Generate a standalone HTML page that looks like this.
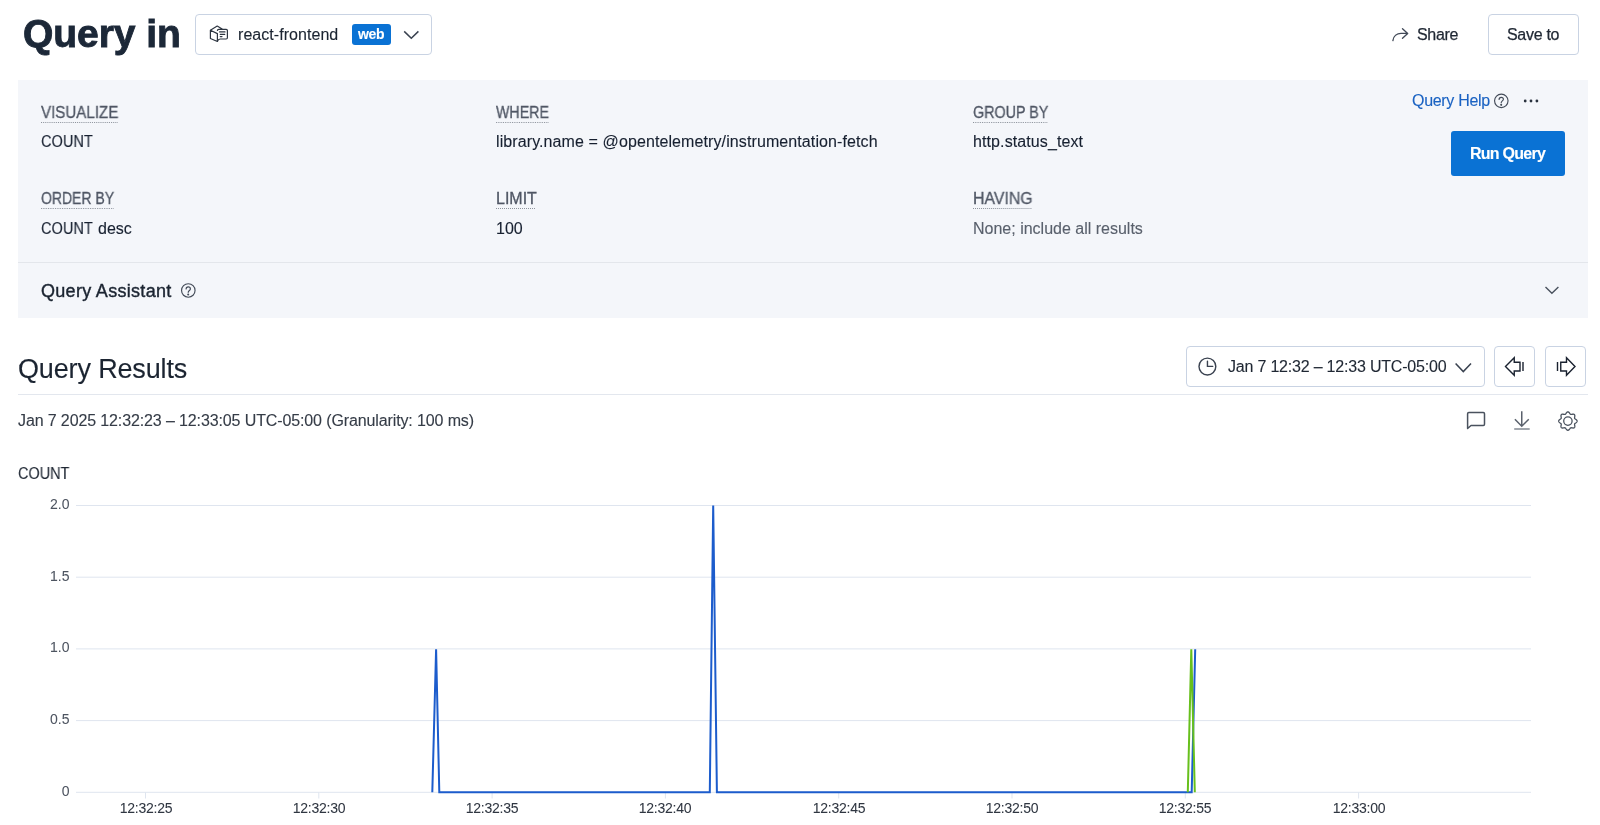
<!DOCTYPE html>
<html><head><meta charset="utf-8">
<style>
html,body{margin:0;padding:0;background:#fff;width:1600px;height:825px;overflow:hidden;position:relative}
body{font-family:"Liberation Sans",sans-serif;color:#172030}
.t{position:absolute;will-change:transform;-webkit-text-stroke-width:0.12px;white-space:nowrap;line-height:1;font-size:16px}
.box{position:absolute;box-sizing:border-box;border:1px solid #c9d3e3;border-radius:4px;background:#fff}
svg{position:absolute;overflow:visible}
.lbl{color:#4f5664;-webkit-text-stroke-width:0.3px;text-decoration:underline dotted #8d939c;text-underline-offset:4px;text-decoration-thickness:1px}
</style></head><body>

<!-- header -->
<div class="t" style="left:23.3px;top:13.8px;font-size:39px;letter-spacing:-0.05px;-webkit-text-stroke-width:0.9px;font-weight:700;color:#1c2838">Query in</div>
<div class="box" style="left:195px;top:14px;width:237px;height:41px"></div>
<svg style="left:205px;top:20px" width="40" height="28" viewBox="0 0 40 28" fill="none" stroke="#2d3540" stroke-width="1.2" stroke-linejoin="round" stroke-linecap="round">
  <path d="M12.4 21.5 L5.4 18.5 L5.4 10.2 L12.2 6.1 L17.6 9.2 M5.4 10.2 L12.4 13.6 L12.4 21.5 M12.4 21.5 Q13.2 19 15.2 19 H21.2 Q22.4 19 22.4 17.8 V10.5 Q22.4 9.3 21.2 9.3 H13.8 Q12.4 9.3 12.4 10.5"/>
  <path d="M14.6 11.9 H20 M15.3 14.4 H19.7 M15.3 16.6 H17"/>
</svg>
<div class="t" style="left:238px;top:26.6px;letter-spacing:0.05px;color:#1b2431">react-frontend</div>
<div style="position:absolute;left:352px;top:24px;width:38.5px;height:20.5px;background:#0a72d4;border-radius:3px"></div>
<div class="t" style="left:358px;top:27px;font-size:14px;font-weight:700;color:#fff;letter-spacing:-0.3px">web</div>
<svg style="left:400px;top:28px" width="24" height="14" viewBox="0 0 24 14" fill="none" stroke="#3a4250" stroke-width="1.5"><path d="M4.2 3.4 L11.3 10.3 L18.4 3.4"/></svg>

<svg style="left:1385px;top:22px" width="30" height="24" viewBox="0 0 30 24" fill="none" stroke="#414957" stroke-width="1.35" stroke-linecap="round" stroke-linejoin="round"><path d="M7.9 18.6 C8.5 14 12 11.4 16 11.4 H22.5 M17.5 6.8 L22.7 11.4 L17.5 16.2"/></svg>
<div class="t" style="left:1416.7px;top:26.5px;letter-spacing:-0.3px;color:#1f2733;-webkit-text-stroke:0.25px #1f2733">Share</div>
<div class="box" style="left:1488px;top:14px;width:91px;height:41px"></div>
<div class="t" style="left:1506.5px;top:26.5px;letter-spacing:-0.3px;color:#1f2733;-webkit-text-stroke:0.25px #1f2733">Save to</div>

<!-- query panel -->
<div style="position:absolute;left:18px;top:80px;width:1570px;height:238px;background:#f4f6fa"></div>
<div style="position:absolute;left:18px;top:262px;width:1570px;height:1px;background:#e3e6eb"></div>

<div class="t lbl" style="left:41px;top:104.8px;transform:scaleX(0.945);transform-origin:0 0">VISUALIZE</div>
<div class="t" style="left:41px;top:134.3px;transform:scaleX(0.912);transform-origin:0 0">COUNT</div>
<div class="t lbl" style="left:496px;top:104.8px;transform:scaleX(0.888);transform-origin:0 0">WHERE</div>
<div class="t" style="left:496px;top:134px;letter-spacing:0.1px">library.name = @opentelemetry/instrumentation-fetch</div>
<div class="t lbl" style="left:973px;top:104.8px;transform:scaleX(0.895);transform-origin:0 0">GROUP BY</div>
<div class="t" style="left:973px;top:134px;letter-spacing:0.1px">http.status_text</div>

<div class="t lbl" style="left:41px;top:191.2px;transform:scaleX(0.874);transform-origin:0 0">ORDER BY</div>
<div class="t" style="left:41px;top:220.8px;transform:scaleX(0.912);transform-origin:0 0">COUNT</div><div class="t" style="left:97.6px;top:220.8px">desc</div>
<div class="t lbl" style="left:496px;top:191.2px;letter-spacing:0px">LIMIT</div>
<div class="t" style="left:496px;top:220.6px">100</div>
<div class="t lbl" style="left:973px;top:191.2px;transform:scaleX(0.99);transform-origin:0 0">HAVING</div>
<div class="t" style="left:973px;top:220.6px;color:#59606c">None; include all results</div>

<div class="t" style="left:1411.5px;top:92.7px;letter-spacing:-0.3px;color:#1a62c2">Query Help</div>
<svg style="left:1490px;top:90px" width="22" height="22" viewBox="0 0 22 22" fill="none" stroke="#434b58" stroke-width="1.15" stroke-linecap="round"><circle cx="11.3" cy="10.85" r="6.75"/><path d="M9.1 9.4 C9.1 8.1 10 7.3 11.2 7.3 C12.5 7.3 13.4 8.1 13.4 9.3 C13.4 10.7 11.2 11.1 11.2 12.7"/><circle cx="11.2" cy="14.85" r="0.45" fill="#434b58"/></svg>
<svg style="left:1520px;top:96px" width="22" height="10" viewBox="0 0 22 10"><circle cx="5.2" cy="5" r="1.4" fill="#2a323e"/><circle cx="11" cy="5" r="1.4" fill="#2a323e"/><circle cx="16.9" cy="5" r="1.4" fill="#2a323e"/></svg>

<div style="position:absolute;left:1451px;top:131px;width:114px;height:45px;background:#0a72d4;border-radius:3px"></div>
<div class="t" style="left:1470px;top:145.5px;font-size:16px;font-weight:700;color:#fff;letter-spacing:-0.75px">Run Query</div>

<div class="t" style="left:41px;top:282px;font-size:18px;color:#1b2431;-webkit-text-stroke:0.4px #1b2431;letter-spacing:0.3px">Query Assistant</div>
<svg style="left:178px;top:280px" width="22" height="22" viewBox="0 0 22 22" fill="none" stroke="#434b58" stroke-width="1.15" stroke-linecap="round"><circle cx="10.3" cy="10.45" r="6.75"/><path d="M8.1 9 C8.1 7.7 9 6.9 10.2 6.9 C11.5 6.9 12.4 7.7 12.4 8.9 C12.4 10.3 10.2 10.7 10.2 12.3"/><circle cx="10.2" cy="14.45" r="0.45" fill="#434b58"/></svg>
<svg style="left:1540px;top:282px" width="24" height="18" viewBox="0 0 24 18" fill="none" stroke="#4a525e" stroke-width="1.4"><path d="M5.5 5 L11.9 11.3 L18.4 5"/></svg>

<!-- results header -->
<div class="t" style="left:18px;top:356.3px;font-size:27px;letter-spacing:-0.15px;color:#1b2431">Query Results</div>
<div style="position:absolute;left:18px;top:394px;width:1570px;height:1px;background:#e3e7ee"></div>

<div class="box" style="left:1186px;top:346px;width:299px;height:41px"></div>
<svg style="left:1194px;top:352px" width="30" height="30" viewBox="0 0 30 30" fill="none" stroke="#3a4250" stroke-width="1.4" stroke-linecap="round"><circle cx="13.4" cy="14.55" r="8.4"/><path d="M13.45 9.3 V14.4 H18.7"/></svg>
<div class="t" style="left:1228.3px;top:359px;color:#1f2733;letter-spacing:-0.2px">Jan 7 12:32 – 12:33 UTC-05:00</div>
<svg style="left:1450px;top:358px" width="26" height="18" viewBox="0 0 26 18" fill="none" stroke="#3a4250" stroke-width="1.5"><path d="M5.6 5.4 L13.3 13.6 L21 5.4"/></svg>

<div class="box" style="left:1494px;top:346px;width:41px;height:41px"></div>
<svg style="left:1500px;top:352px" width="30" height="30" viewBox="0 0 30 30" fill="none" stroke="#1a2230" stroke-width="1.4" stroke-linejoin="miter"><path d="M5.5 14.5 L14.25 5.75 V10.25 H20 V19 H14.25 V23.25 Z M23 10 V19"/></svg>
<div class="box" style="left:1545px;top:346px;width:41px;height:41px"></div>
<svg style="left:1550px;top:352px" width="30" height="30" viewBox="0 0 30 30" fill="none" stroke="#1a2230" stroke-width="1.4" stroke-linejoin="miter"><path d="M25 14.5 L16.5 5.75 V10.25 H10.75 V19 H16.5 V23.25 Z M7.5 10 V19"/></svg>

<div class="t" style="left:18px;top:412.6px;color:#353c47;letter-spacing:-0.12px">Jan 7 2025 12:32:23 – 12:33:05 UTC-05:00 (Granularity: 100 ms)</div>

<!-- action icons -->
<svg style="left:1460px;top:405px" width="30" height="30" viewBox="0 0 30 30" fill="none" stroke="#4a525e" stroke-width="1.5" stroke-linejoin="round"><path d="M8.8 7.5 H23.3 Q24.5 7.5 24.5 8.7 V19.3 Q24.5 20.5 23.3 20.5 H11 L7.6 23.5 V8.7 Q7.6 7.5 8.8 7.5 Z"/></svg>
<svg style="left:1505px;top:405px" width="30" height="30" viewBox="0 0 30 30" fill="none" stroke="#5a616c" stroke-width="1.5"><path d="M16.75 6.25 V21 M9.9 14.2 L16.75 21.2 L23.75 14.2"/><path d="M9.2 24 H24.7" stroke="#8a9099" stroke-width="1.6"/></svg>
<svg style="left:1552px;top:405px" width="32" height="32" viewBox="0 0 32 32" fill="none" stroke="#4a525e" stroke-width="1.3" stroke-linejoin="round"><path d="M15.90 6.90 L16.26 6.95 L16.61 7.11 L16.94 7.35 L17.24 7.66 L17.51 8.01 L17.76 8.36 L17.99 8.70 L18.21 8.98 L18.44 9.21 L18.69 9.36 L18.98 9.43 L19.30 9.43 L19.66 9.39 L20.06 9.32 L20.48 9.24 L20.92 9.19 L21.35 9.18 L21.76 9.24 L22.11 9.38 L22.41 9.59 L22.62 9.89 L22.76 10.24 L22.82 10.65 L22.81 11.08 L22.76 11.52 L22.68 11.94 L22.61 12.34 L22.57 12.70 L22.57 13.02 L22.64 13.31 L22.79 13.56 L23.02 13.79 L23.30 14.01 L23.64 14.24 L23.99 14.49 L24.34 14.76 L24.65 15.06 L24.89 15.39 L25.05 15.74 L25.10 16.10 L25.05 16.46 L24.89 16.81 L24.65 17.14 L24.34 17.44 L23.99 17.71 L23.64 17.96 L23.30 18.19 L23.02 18.41 L22.79 18.64 L22.64 18.89 L22.57 19.18 L22.57 19.50 L22.61 19.86 L22.68 20.26 L22.76 20.68 L22.81 21.12 L22.82 21.55 L22.76 21.96 L22.62 22.31 L22.41 22.61 L22.11 22.82 L21.76 22.96 L21.35 23.02 L20.92 23.01 L20.48 22.96 L20.06 22.88 L19.66 22.81 L19.30 22.77 L18.98 22.77 L18.69 22.84 L18.44 22.99 L18.21 23.22 L17.99 23.50 L17.76 23.84 L17.51 24.19 L17.24 24.54 L16.94 24.85 L16.61 25.09 L16.26 25.25 L15.90 25.30 L15.54 25.25 L15.19 25.09 L14.86 24.85 L14.56 24.54 L14.29 24.19 L14.04 23.84 L13.81 23.50 L13.59 23.22 L13.36 22.99 L13.11 22.84 L12.82 22.77 L12.50 22.77 L12.14 22.81 L11.74 22.88 L11.32 22.96 L10.88 23.01 L10.45 23.02 L10.04 22.96 L9.69 22.82 L9.39 22.61 L9.18 22.31 L9.04 21.96 L8.98 21.55 L8.99 21.12 L9.04 20.68 L9.12 20.26 L9.19 19.86 L9.23 19.50 L9.23 19.18 L9.16 18.89 L9.01 18.64 L8.78 18.41 L8.50 18.19 L8.16 17.96 L7.81 17.71 L7.46 17.44 L7.15 17.14 L6.91 16.81 L6.75 16.46 L6.70 16.10 L6.75 15.74 L6.91 15.39 L7.15 15.06 L7.46 14.76 L7.81 14.49 L8.16 14.24 L8.50 14.01 L8.78 13.79 L9.01 13.56 L9.16 13.31 L9.23 13.02 L9.23 12.70 L9.19 12.34 L9.12 11.94 L9.04 11.52 L8.99 11.08 L8.98 10.65 L9.04 10.24 L9.18 9.89 L9.39 9.59 L9.69 9.38 L10.04 9.24 L10.45 9.18 L10.88 9.19 L11.32 9.24 L11.74 9.32 L12.14 9.39 L12.50 9.43 L12.82 9.43 L13.11 9.36 L13.36 9.21 L13.59 8.98 L13.81 8.70 L14.04 8.36 L14.29 8.01 L14.56 7.66 L14.86 7.35 L15.19 7.11 L15.54 6.95 Z"/><circle cx="15.9" cy="16.1" r="4.2"/></svg>

<!-- chart -->
<div class="t" style="left:18px;top:466px;color:#1f2733;transform:scaleX(0.904);transform-origin:0 0">COUNT</div>

<svg style="left:0;top:0" width="1600" height="825" viewBox="0 0 1600 825">
<g stroke="#dfe5ef" stroke-width="1" fill="none"><line x1="76" y1="505.5" x2="1531" y2="505.5"/><line x1="76" y1="577.2" x2="1531" y2="577.2"/><line x1="76" y1="648.9" x2="1531" y2="648.9"/><line x1="76" y1="720.6" x2="1531" y2="720.6"/><line x1="76" y1="792.3" x2="1531" y2="792.3"/><line x1="145.5" y1="792.3" x2="145.5" y2="798.5"/><line x1="318.8" y1="792.3" x2="318.8" y2="798.5"/><line x1="492.1" y1="792.3" x2="492.1" y2="798.5"/><line x1="665.4" y1="792.3" x2="665.4" y2="798.5"/><line x1="838.7" y1="792.3" x2="838.7" y2="798.5"/><line x1="1012.0" y1="792.3" x2="1012.0" y2="798.5"/><line x1="1185.3" y1="792.3" x2="1185.3" y2="798.5"/><line x1="1358.6" y1="792.3" x2="1358.6" y2="798.5"/></g>
<path d="M432.3 792.3 L436.1 649.2 L439.3 792.3 L709.8 792.3 L713.2 505.6 L716.9 792.3 L1191.7 792.3 L1195.2 649.2" fill="none" stroke="#1c5ccc" stroke-width="2" stroke-linejoin="miter"/>
<path d="M1187.8 792.3 L1191.3 649.2 L1194.8 792.3" fill="none" stroke="#67c01c" stroke-width="2"/>
</svg>
<div class="t" style="left:0;width:69.5px;text-align:right;top:497.0px;font-size:14px;color:#4d5460;-webkit-text-stroke-width:0.05px">2.0</div><div class="t" style="left:0;width:69.5px;text-align:right;top:568.7px;font-size:14px;color:#4d5460;-webkit-text-stroke-width:0.05px">1.5</div><div class="t" style="left:0;width:69.5px;text-align:right;top:640.4px;font-size:14px;color:#4d5460;-webkit-text-stroke-width:0.05px">1.0</div><div class="t" style="left:0;width:69.5px;text-align:right;top:712.1px;font-size:14px;color:#4d5460;-webkit-text-stroke-width:0.05px">0.5</div><div class="t" style="left:0;width:69.5px;text-align:right;top:783.8px;font-size:14px;color:#4d5460;-webkit-text-stroke-width:0.05px">0</div><div class="t" style="left:105.5px;width:80px;text-align:center;top:800.5px;font-size:14px;color:#2f3641;letter-spacing:-0.25px;-webkit-text-stroke-width:0.05px">12:32:25</div><div class="t" style="left:278.8px;width:80px;text-align:center;top:800.5px;font-size:14px;color:#2f3641;letter-spacing:-0.25px;-webkit-text-stroke-width:0.05px">12:32:30</div><div class="t" style="left:452.1px;width:80px;text-align:center;top:800.5px;font-size:14px;color:#2f3641;letter-spacing:-0.25px;-webkit-text-stroke-width:0.05px">12:32:35</div><div class="t" style="left:625.4px;width:80px;text-align:center;top:800.5px;font-size:14px;color:#2f3641;letter-spacing:-0.25px;-webkit-text-stroke-width:0.05px">12:32:40</div><div class="t" style="left:798.7px;width:80px;text-align:center;top:800.5px;font-size:14px;color:#2f3641;letter-spacing:-0.25px;-webkit-text-stroke-width:0.05px">12:32:45</div><div class="t" style="left:972.0px;width:80px;text-align:center;top:800.5px;font-size:14px;color:#2f3641;letter-spacing:-0.25px;-webkit-text-stroke-width:0.05px">12:32:50</div><div class="t" style="left:1145.3px;width:80px;text-align:center;top:800.5px;font-size:14px;color:#2f3641;letter-spacing:-0.25px;-webkit-text-stroke-width:0.05px">12:32:55</div><div class="t" style="left:1318.6px;width:80px;text-align:center;top:800.5px;font-size:14px;color:#2f3641;letter-spacing:-0.25px;-webkit-text-stroke-width:0.05px">12:33:00</div>
</body></html>
